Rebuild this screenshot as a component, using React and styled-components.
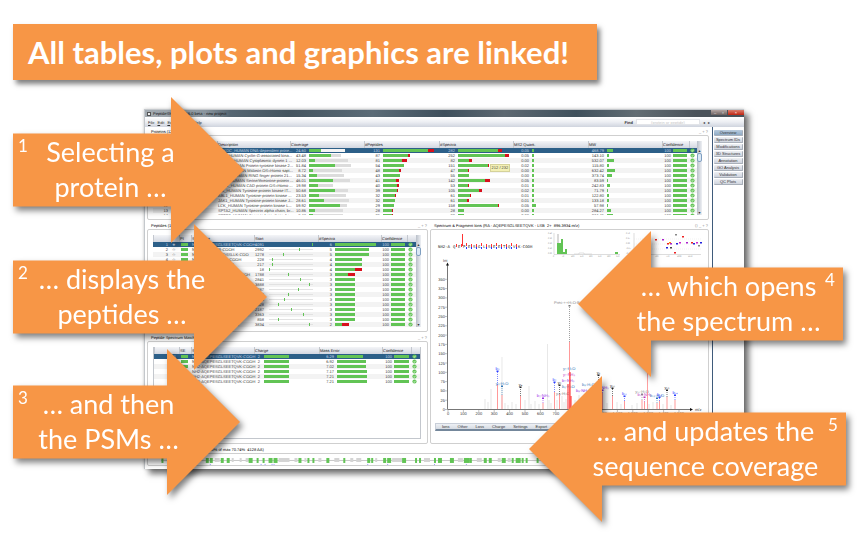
import React from "react";
import styled, { createGlobalStyle, css } from "styled-components";

const ORANGE = "#f79646";
const GREEN = "#62c455";
const RED = "#d8101c";

const Global = createGlobalStyle`
  * { box-sizing: border-box; }
  body { margin: 0; background: #fff; font-family: "Liberation Sans", Arial, sans-serif; }
  button, input { font: inherit; color: inherit; margin: 0; padding: 0; border: 0; background: none; }
`;

/* ---------- slide ---------- */
const Slide = styled.main`
  padding: 24px 21px 0 13px;
`;
const Headline = styled.h1`
  width: fit-content;
  margin: 0;
  padding: 0 28px 0 15px;
  background: ${ORANGE};
  color: #fff;
  font: bold 31px/56px Lato, sans-serif;
  white-space: nowrap;
  box-shadow: 3px 4px 5px rgba(0, 0, 0, 0.5);
`;
const Stage = styled.div`
  position: relative;
  margin-top: 17px;
  padding: 12px 102px 72px 131px;
`;

/* ---------- callout arrows ---------- */
const ArrowPlace = styled.div`
  position: absolute;
  top: ${(p) => p.$top}px;
  ${(p) => (p.$left ? "left: 0;" : `right: ${p.$right || 0}px;`)}
  width: ${(p) => p.$width}px;
  filter: drop-shadow(3px 4px 3px rgba(0, 0, 0, 0.5));
`;
const ArrowShape = styled.div`
  display: flex;
  height: 146px;
  padding: 37px 5px;
  background: ${ORANGE};
  color: #fff;
  ${(p) =>
    p.$left
      ? css`
          padding-right: 54px;
          clip-path: polygon(0 25%, calc(100% - 73px) 25%, calc(100% - 73px) 0, 100% 50%, calc(100% - 73px) 100%, calc(100% - 73px) 75%, 0 75%);
        `
      : css`
          flex-direction: row-reverse;
          padding-left: 54px;
          clip-path: polygon(100% 25%, 73px 25%, 73px 0, 0 50%, 73px 100%, 73px 75%, 100% 75%);
        `}
`;
const ArrowNumber = styled.span`
  width: 13px;
  font: 17px/24px Lato, sans-serif;
`;
const ArrowText = styled.p`
  flex: 1;
  display: flex;
  flex-direction: column;
  align-items: center;
  margin: 0;
  font: 27px/35px Lato, sans-serif;
  white-space: pre;
`;
function Arrow({ left, top, right, width, number, lines }) {
  return (
    <ArrowPlace $left={left} $top={top} $right={right} $width={width}>
      <ArrowShape $left={left}>
        <ArrowNumber>{number}</ArrowNumber>
        <ArrowText>
          {lines.map((l) => (
            <span key={l}>{l}</span>
          ))}
        </ArrowText>
      </ArrowShape>
    </ArrowPlace>
  );
}

/* ---------- application window ---------- */
const Window = styled.section`
  background: #fff;
  color: #333;
  font-size: 4px;
  line-height: 5px;
  text-rendering: geometricPrecision;
  border: 1px solid #c4c8cc;
  border-width: 1px 0 0 1px;
  box-shadow: 5px 5px 6px rgba(0, 0, 0, 0.55), 0 0 3px rgba(0, 0, 0, 0.2);
`;
const TitleBar = styled.header`
  display: flex;
  align-items: center;
  height: 7px;
  padding-left: 2px;
  gap: 2px;
  color: #111;
  background: linear-gradient(90deg, #a3abb2 0, #8b969e 60px, #566672 85px, #44545f 24%, #5b6b77 38%, #3e4f5c 50%, #5d6871 60%, #3f505c 72%, #626d74 82%, #4a525a 92%);
`;
const AppGlyph = styled.span`
  width: 4px;
  height: 4px;
  border: 1px solid #555;
  background: #eee;
`;
const TitleText = styled.span`
  flex: 1;
`;
const WindowButton = styled.button`
  width: ${(p) => (p.$close ? 16 : 8)}px;
  height: 5px;
  align-self: flex-start;
  color: #fff;
  line-height: 4px;
  background: ${(p) => (p.$close ? "linear-gradient(#d98070, #c2230f)" : "linear-gradient(#b5a6a3, #6b605f)")};
  margin-left: ${(p) => (p.$close ? -1 : -2)}px;
`;
const MenuBar = styled.nav`
  display: flex;
  align-items: center;
  gap: 3px;
  height: 10px;
  padding: 0 34px 0 3px;
  background: linear-gradient(#fff, #eceef3 50%, #cfd4de);
`;
const MenuButton = styled.button`
  line-height: 5px;
  &::first-letter {
    text-decoration: underline;
  }
`;
const StepButton = styled.button`
  line-height: 5px;
`;
const FindLabel = styled.label`
  display: flex;
  align-items: center;
  gap: 3px;
  margin-left: auto;
  font-weight: bold;
`;
const FindInput = styled.input`
  width: 64px;
  height: 6px;
  background: #fff;
  border: 1px solid #e2e4e8;
  font-weight: normal;
  text-align: center;
  &::placeholder { color: #c4c4c4; }
`;
const Body = styled.div`
  display: flex;
`;
const Content = styled.div`
  flex: 1;
  min-width: 0;
  display: flex;
  flex-direction: column;
  gap: 2px;
  padding: 1px 3px 3px 2px;
  border-right: 1px solid #3f5b7b;
`;
const Split = styled.div`
  display: grid;
  grid-template-columns: 281fr 279fr;
  gap: 2px;
`;
const Stack = styled.div`
  display: flex;
  flex-direction: column;
  gap: 2px;
  min-width: 0;
`;
const SideTabs = styled.aside`
  width: 31px;
  display: flex;
  flex-direction: column;
  gap: 1px;
  padding: 3px 1px;
`;
const SideTab = styled.button`
  height: 6px;
  line-height: 4px;
  white-space: nowrap;
  border: 1px solid #a9b0ba;
  border-width: 0 1px 1px 0;
  border-radius: 1px;
  background: ${(p) => (p.$on ? "linear-gradient(#b9cbdd, #8fabc6)" : "linear-gradient(#eef0f4, #cfd4de)")};
`;

/* ---------- panels ---------- */
const PanelHead = styled.div`
  display: flex;
  justify-content: space-between;
  height: 7px;
  padding: 1px 1px 0 4px;
`;
const PanelTitle = styled.h2`
  margin: 0;
  font-size: 4px;
  line-height: 5px;
  font-weight: normal;
  color: #000;
  white-space: pre;
`;
const PanelTools = styled.span`
  color: #888;
`;
const Frame = styled.div`
  position: relative;
  height: ${(p) => (p.$h ? `${p.$h}px` : "auto")};
  padding: ${(p) => (p.$flush ? "0" : "5px 6px 4px 5px")};
  border: 1px solid #cfcfcf;
  border-radius: 2px;
`;
const PanelBox = styled.section`
  min-width: 0;
`;
function Panel({ title, tools = "_ + ?", h, flush, children }) {
  return (
    <PanelBox>
      <PanelHead>
        <PanelTitle>{title}</PanelTitle>
        <PanelTools>{tools}</PanelTools>
      </PanelHead>
      <Frame $h={h} $flush={flush}>
        {children}
      </Frame>
    </PanelBox>
  );
}

/* ---------- tables ---------- */
const TableArea = styled.div`
  display: flex;
  height: 100%;
  overflow: hidden;
  border: 1px solid #c3c7cd;
  border-width: 0 ${(p) => (p.$boxed ? 1 : 0)}px ${(p) => (p.$boxed ? 1 : 0)}px ${(p) => (p.$boxed ? 1 : 0)}px;
`;
const Viewport = styled.div`
  flex: 1;
  min-width: 0;
  overflow: hidden;
`;
const Table = styled.table`
  width: 100%;
  table-layout: fixed;
  border-collapse: collapse;
`;
const Col = styled.col`
  width: ${(p) => p.$w}px;
`;
const Th = styled.th`
  height: 7px;
  padding: 0 0 0 1px;
  text-align: left;
  font-weight: normal;
  color: #111;
  line-height: 6px;
  white-space: nowrap;
  background: linear-gradient(#f4f5f8, #d3d7e0);
  box-shadow: inset 1px 0 #c3c7cf;
`;
const Tr = styled.tr`
  background: ${(p) => (p.$on ? "#2c5f88" : p.$odd ? "#fff" : "#f3f3f3")};
  color: ${(p) => (p.$on ? "#c9d9e6" : "#3a3a3a")};
`;
const Td = styled.td`
  height: 5px;
  padding: 0 ${(p) => (p.$align === "right" ? 3 : 0)}px 0 1px;
  line-height: 5px;
  white-space: nowrap;
  text-align: ${(p) => p.$align || "left"};
`;
const CellLine = styled.div`
  display: flex;
  align-items: center;
  height: 5px;
  gap: ${(p) => p.$gap || 3}px;
`;
const Num = styled.span`
  width: ${(p) => p.$w}px;
  text-align: right;
  flex: none;
`;
const Bar = styled.span`
  display: flex;
  flex: none;
  height: 3px;
`;
const Seg = styled.span`
  background: ${(p) => p.$c};
`;
const Line = styled.span`
  position: relative;
  width: 44px;
  height: 1px;
  background: ${(p) => (p.$on ? "none" : "#e2e2e2")};
`;
const Tick = styled.span`
  position: absolute;
  top: -1px;
  width: 1px;
  height: 3px;
  background: ${GREEN};
`;
const IdLink = styled.a`
  color: #2a2ad0;
`;
const ScrollBar = styled.div`
  width: 5px;
  display: flex;
  flex-direction: column;
  justify-content: space-between;
  align-items: center;
  padding-top: 7px;
  background: linear-gradient(90deg, #b9bfc9, #eef0f4);
`;
const Knob = styled.span`
  width: 5px;
  height: 9px;
  margin: 0 0 auto;
  border: 1px solid #7f9fc0;
  border-radius: 2px;
  background: #dbe8f5;
`;
const TooltipBox = styled.div`
  position: absolute;
  left: 61%;
  top: 28px;
  padding: 1px;
  background: #f3f0b4;
  border: 1px solid #d5d29a;
  line-height: 4px;
  color: #444;
`;

const Check = () => (
  <svg width="5" height="5" viewBox="0 0 10 10" role="img" aria-label="Valid">
    <circle cx="5" cy="5" r="4.2" fill={GREEN} />
    <path d="M2.8 5.2 4.4 6.8 7.3 3.4" fill="none" stroke="#fff" strokeWidth="1.3" />
  </svg>
);

function Bars({ n, nw = 15, gap, segs }) {
  return (
    <CellLine $gap={gap}>
      <Num $w={nw}>{n}</Num>
      <Bar>
        {segs.map(([w, c], i) => (
          <Seg key={i} $c={c} style={{ width: w }} />
        ))}
      </Bar>
    </CellLine>
  );
}
function Scroller() {
  return (
    <ScrollBar>
      <span>▴</span>
      <Knob />
      <span>▾</span>
    </ScrollBar>
  );
}
function DataTable({ cols, heads, rows, scroll, boxed }) {
  return (
    <TableArea $boxed={boxed}>
      <Viewport>
        <Table>
          <colgroup>
            {cols.map((w, i) => (
              <Col key={i} $w={w} />
            ))}
          </colgroup>
          <thead>
            <tr>
              {heads.map((h, i) => (
                <Th key={i}>{h}</Th>
              ))}
            </tr>
          </thead>
          <tbody>
            {rows.map((r, i) => (
              <Tr key={i} $on={i === 0} $odd={i % 2 === 1}>
                {r.map((c, j) => (
                  <Td key={j} $align={j === 0 ? "right" : "left"}>
                    {c}
                  </Td>
                ))}
              </Tr>
            ))}
          </tbody>
        </Table>
      </Viewport>
      {scroll && <Scroller />}
    </TableArea>
  );
}

/* accession, description, coverage [value, green, total], peptides, spectra, MS2, MW */
const PROTEINS = [
  ["P78527", "PRKDC_HUMAN DNA-dependent prote...", ["24.60", 12, 36], [131, 45, 6], [282, 40, 4], ["0.05", 2], ["468.79", 6]],
  ["O14976", "GAK_HUMAN Cyclin-G-associated kina...", ["43.48", 22, 32], [87, 25, 2], [252, 47, 4], ["0.05", 2], ["143.10", 2]],
  ["Q14204", "DYHC1_HUMAN Cytoplasmic dynein 1 ...", ["12.03", 6, 39], [81, 19, 5], [82, 11, 3], ["0.00", 2], ["532.07", 7]],
  ["Q14289", "FAK2_HUMAN Protein-tyrosine kinase 2...", ["51.84", 26, 42], [54, 21, 0], [151, 30, 1], ["0.02", 2], ["115.80", 2]],
  ["Q9NU22", "MDN1_HUMAN Midasin OS=Homo sapi...", ["8.72", 4, 33], [48, 16, 2], [47, 10, 1], ["0.00", 2], ["632.42", 8]],
  ["Q63HN8", "RN213_HUMAN RING finger protein 21...", ["15.34", 8, 35], [43, 17, 0], [55, 11, 0], ["0.00", 2], ["373.74", 5]],
  ["Q9UHD2", "TBK1_HUMAN Serine/threonine-protein ...", ["46.01", 24, 41], [41, 13, 3], [142, 27, 5], ["0.05", 2], ["83.59", 1]],
  ["P27708", "PYR1_HUMAN CAD protein OS=Homo ...", ["19.98", 9, 24], [40, 14, 2], [53, 10, 1], ["0.01", 2], ["242.83", 3]],
  ["Q08881", "ITK_HUMAN Tyrosine-protein kinase IT...", ["50.68", 26, 39], [39, 14, 1], [105, 21, 3], ["0.02", 2], ["71.79", 1]],
  ["P00519", "ABL1_HUMAN Tyrosine-protein kinase ...", ["23.53", 10, 37], [32, 12, 1], [61, 12, 1], ["0.01", 2], ["122.80", 2]],
  ["P23458", "JAK1_HUMAN Tyrosine-protein kinase J...", ["28.61", 15, 40], [32, 12, 0], [61, 9, 2], ["0.01", 2], ["133.18", 2]],
  ["P06239", "LCK_HUMAN Tyrosine-protein kinase L...", ["59.92", 31, 38], [29, 11, 0], [158, 40, 1], ["0.05", 4], ["57.98", 1]],
  ["Q13813", "SPTA2_HUMAN Spectrin alpha chain, br...", ["10.86", 6, 34], [28, 9, 1], [28, 6, 0], ["0.00", 2], ["284.27", 4]],
  ["Q01082", "SPTB2_HUMAN Spectrin beta chain, br...", ["8.48", 4, 34], [25, 9, 1], [33, 6, 0], ["0.00", 2], ["274.45", 6]],
];
const proteinRows = PROTEINS.map(([id, d, cov, pep, spec, ms2, mw], i) => [
  i + 1,
  "★",
  <IdLink href={`#${id}`}>{id}</IdLink>,
  d,
  <Bars n={cov[0]} segs={[[cov[1], GREEN], [cov[2] - cov[1], i === 0 ? "#f4f4f4" : "#dcdcdc"]]} />,
  <Bars n={pep[0]} segs={[[pep[1], GREEN], [pep[2], RED]]} />,
  <Bars n={spec[0]} segs={[[spec[1], GREEN], [spec[2], RED]]} />,
  <Bars n={ms2[0]} segs={[[ms2[1], GREEN]]} />,
  <Bars n={mw[0]} segs={[[mw[1], GREEN]]} />,
  <Bars n="100" nw={8} gap={2} segs={[[14, GREEN]]} />,
  <CellLine><Check /></CellLine>,
]);

/* sequence, start, tick offset, spectra, green, red */
const PEPTIDES = [
  ["NH2-AQEPESGLSEETQVK-COOH", 4091, 43, 6, 41, 0],
  ["NH2-LLEEALLR-COOH", 2992, 30, 5, 34, 0],
  ["NH2-GHAVTLVGQSSLLK-COO", 1278, 14, 5, 34, 0],
  ["NH2-FLNILQTLPSK-COOH", 228, 3, 4, 27, 0],
  ["NH2-DILETHLR-COOH", 217, 3, 4, 27, 0],
  ["NH2-LQETLSR-COOH", 18, 0, 4, 20, 7],
  ["NH2-SLGPPQEEDSVPR-COOH", 1788, 19, 3, 13, 7],
  ["NH2-HSSLITPLQR-COOH", 2841, 31, 3, 20, 0],
  ["NH2-AALSALESFLK-COOH", 3888, 40, 3, 20, 0],
  ["NH2-LGASLAFNR-COOH", 2787, 29, 3, 20, 0],
  ["NH2-TVSLLDENK-COOH", 1918, 19, 3, 20, 0],
  ["NH2-LACDVDQVTR-COOH", 1434, 15, 3, 20, 0],
  ["NH2-VTELALTASR-COOH", 828, 9, 3, 20, 0],
  ["NH2-NELEIPGQR-COOH", 2187, 22, 3, 20, 0],
  ["NH2-INQVFHGSNELTK-COOH", 3363, 34, 3, 20, 0],
  ["NH2-LGNPIVPLNIIR-COOH", 858, 9, 3, 20, 0],
  ["NH2-MSTSPEALR-COOH", 3834, 40, 2, 7, 7],
];
const peptideRows = PEPTIDES.map(([seq, start, tick, n, g, r], i) => [
  i + 1,
  i ? "☆" : "★",
  <Bars n="" nw={0} gap={1} segs={[[7, GREEN]]} />,
  seq,
  <CellLine $gap={5}>
    <Num $w={9}>{start}</Num>
    <Line $on={i === 0}><Tick style={{ left: tick }} /></Line>
  </CellLine>,
  <Bars n={n} nw={13} segs={[[g, GREEN], [r, RED]]} />,
  <Bars n="100" nw={7} gap={2} segs={[[14, GREEN]]} />,
  <CellLine><Check /></CellLine>,
]);

const PSMS = [["6.29", 26], ["6.92", 29], ["7.02", 29], ["7.17", 30], ["7.21", 30], ["7.21", 30]];
const psmRows = PSMS.map(([err, w], i) => [
  i + 1,
  <Bars n="" nw={0} gap={1} segs={[[7, GREEN]]} />,
  "NH2-AQEPESGLSEETQVK-COOH",
  <Bars n="2" nw={5} gap={4} segs={[[25, GREEN]]} />,
  <Bars n={err} nw={14} segs={[[w, GREEN]]} />,
  <Bars n="100" nw={9} gap={2} segs={[[15, GREEN]]} />,
  <CellLine><Check /></CellLine>,
]);

/* ---------- spectrum ---------- */
const Chart = styled.svg`
  display: block;
  width: 100%;
  font-family: "Liberation Sans", sans-serif;
`;
const X0 = 448;
const Y0 = 409;
/* x, top of peak, height of label, label, colour */
const PEAKS = [
  [497.5, 385, 371, "b₃", "#2b3cff"],
  [502, 395, 386, "y₃-H₂O", "#2e75b6"],
  [520.5, 396, 387, "y₄", "#222"],
  [543, 403, 398, "b₅-NH₃", "#9b30e8"],
  [554.5, 392, 382, "b₅", "#2b3cff"],
  [559.5, 394, 385, "y₅", "#222"],
  [598.5, 396, 375, "y₆", "#222"],
  [602.5, 393, 390, "b₇-NH₃", "#8a2be2"],
  [612.5, 396, 388, "y₁₀", "#222"],
  [624.5, 401, 396, "b₁₁", "#2b3cff"],
  [642, 400, 394, "y₁₁-H₂O", "#888"],
  [644.5, 402, 397, "b₁₂-NH₃", "#c032c0"],
  [657, 403, 398, "b₁₃-H₂O", "#2e75b6"],
  [659.5, 401, 397, "b₁₃", "#2b3cff"],
  [667, 397, 390, "y₁₃", "#222"],
  [675, 400, 395, "b₁₄", "#2b3cff"],
];
const NOISE = [485, 399, 488, 402, 491, 389, 505, 403, 508, 405, 512, 402, 516, 404, 525, 400, 529, 386, 531, 404, 535, 401, 539, 404, 549, 400, 551, 403, 557, 400, 562, 396, 564, 402, 566, 399, 575, 400, 579, 395, 584, 403, 588, 400, 593, 398, 607, 403, 617, 402, 621, 404, 632, 405, 637, 403, 649, 404, 653, 402, 663, 404, 671, 405];
const CLUSTER = [
  [563, 370, "y₇-H₂O", "#2e75b6"],
  [563, 376, "y₇-NH₃", "#c032c0"],
  [562, 382, "b₇-NH₃", "#8a2be2"],
  [562, 388, "b₆-H₂O", "#2e75b6"],
  [556, 395, "y₁₃-H₂O", "#777"],
  [576, 392, "b₈-NH₃", "#8a2be2"],
  [582, 386, "b₈-H₂O", "#2e75b6"],
];
const SEQ = ["NH2-A", "Q", "E", "P", "E", "S", "G", "L", "S", "E", "E", "T", "Q", "V", "K-COOH"];
const DOTS = [[655, 240, "#e22"], [662, 240, "#a2c"], [675, 235, "#888"], [682, 237, "#e22"], [667, 244, "#e22"], [669, 243, "#f80"], [670, 244, "#a2c"], [676, 244, "#22d"], [679, 243, "#c2c"], [686, 243, "#a2c"], [691, 243, "#e22"], [693, 244, "#22d"], [696, 243, "#c2c"], [700, 243, "#22d"], [666, 248, "#22d"], [670, 248, "#444"], [674, 253, "#e22"], [698, 246, "#888"]];

function Spectrum() {
  const yticks = Array.from({ length: 15 }, (_, i) => i * 25);
  const xticks = Array.from({ length: 16 }, (_, i) => i * 100);
  return (
    <Chart viewBox="431 230 277 190" fontSize="4" role="img" aria-label="Fragment ion spectrum">
      <rect x="462" y="234" width="1" height="12" fill="#f33" />
      {SEQ.map((s, i) => {
        const x = i === 0 ? 438 : 448 + i * 5;
        return (
          <g key={i}>
            <text x={x} y="248" fontFamily="Liberation Mono, monospace" fill="#222">{s}</text>
            {i > 0 && i < 14 && <rect x={x + 3} y={i % 3 ? 244 : 243} width="1" height="3" fill="#f33" />}
            {i > 2 && i < 14 && <rect x={x + 3} y="247" width="1" height="2" fill="#23f" />}
          </g>
        );
      })}
      <path d="M554 233V254.5H620" stroke="#bbb" strokeWidth=".5" fill="none" />
      <path d="M557 254V234H559V254Z" fill="#d9d9d9" />
      <path d="M557 254V243H561V239H563V252H565V249H567V254ZM615 254V252H618V254Z" fill={GREEN} />
      <path d="M574 254H579V253H584V254H592" stroke="#ccc" strokeWidth=".6" fill="none" />
      <path d="M634 233V254.5H701" stroke="#bbb" strokeWidth=".5" fill="none" />
      <path d="M634 239H701M634 244H701M634 249H701" stroke="#ddd" strokeWidth=".4" strokeDasharray="1 1" />
      <g fontSize="2" fill="#777">
        {["0.40", "0.30", "0.20", "0.10", "0.00"].map((v, i) => (
          <text key={v} x="548" y={234 + i * 5}>{v}</text>
        ))}
        {["0.50", "0.25", "0.00", "-0.25", "-0.50"].map((v, i) => (
          <text key={v} x="626" y={234 + i * 5}>{v}</text>
        ))}
        {[0, 50, 100, 150, 200, 250, 300, 350].map((v, i) => (
          <text key={v} x={553 + i * 9} y="257">{v}</text>
        ))}
        {[250, 500, 750, 1000, 1250].map((v, i) => (
          <text key={v} x={644 + i * 11} y="257">{v}</text>
        ))}
      </g>
      {DOTS.map(([x, y, c], i) => (
        <rect key={i} x={x} y={y - 1} width="2" height="1.5" fill={c} />
      ))}

      <path d={`M${X0 - 0.5} 264V${Y0 + 0.5}H691`} stroke="#777" strokeWidth="1" fill="none" />
      <path d="M447.5 262.5l1.5 3h-3zM693 409.5l-3-1.5v3z" fill="#111" />
      <text x="443" y="262" fill="#444">Int</text>
      <text x="695" y="411" fill="#444">m/z</text>
      {yticks.map((v) => (
        <g key={v}>
          <path d={`M445 ${Y0 + 0.5 - (v / 25) * 9.3}h2`} stroke="#999" strokeWidth=".6" />
          <text x="445" y={Y0 + 2 - (v / 25) * 9.3} textAnchor="end" fill="#333">{v}</text>
        </g>
      ))}
      {xticks.map((v) => (
        <g key={v}>
          <path d={`M${X0 + (v / 100) * 15.4} 410v2`} stroke="#999" strokeWidth=".6" />
          <text x={X0 + (v / 100) * 15.4} y="415" textAnchor="middle" fill="#333">{v.toLocaleString("en-US")}</text>
        </g>
      ))}

      {NOISE.map((x, i) => i % 2 === 0 && <path key={i} d={`M${x} ${Y0}V${NOISE[i + 1]}`} stroke="#d5d5d5" strokeWidth=".6" />)}
      <path d="M547.5 409V344M502 409V357" stroke="#d8d8d8" strokeWidth=".6" />
      {PEAKS.map(([x, top, ly, label, c]) => (
        <g key={label + x}>
          <path d={`M${x} ${Y0}V${top}`} stroke="#f99" strokeWidth="1" />
          <path d={`M${x} ${top}V${ly}`} stroke={c} strokeWidth=".6" strokeDasharray="1 1" />
          <rect x={x - 1} y={ly - 0.5} width="2" height="1.5" fill={c} />
          <text x={x} y={ly - 1} textAnchor="middle" fill={c}>{label}</text>
        </g>
      ))}
      {CLUSTER.map(([x, y, t, c]) => (
        <text key={t + y} x={x} y={y} fill={c}>{t}</text>
      ))}
      <path d="M647.5 409V370" stroke="#f88" strokeWidth=".8" />
      <path d="M569.5 342V306" stroke="#777" strokeWidth=".7" strokeDasharray="1 1" />
      <rect x="568.5" y="305" width="2" height="1.5" fill="#777" />
      <path d="M569.5 409V342" stroke="#f99" strokeWidth="1" />
      <path d="M568 409V384M570 409V372M571 409V396" stroke="#f22" strokeWidth="1" />
      <text x="554" y="304" fill="#888">Prec-++H₂O-B</text>
    </Chart>
  );
}
const SpectrumBar = styled.div`
  display: flex;
  align-items: center;
  gap: 8px;
  height: 8px;
  margin: 3px 4px 0;
  padding-left: 6px;
  background: linear-gradient(#eef1f5, #d5dae2);
  border: 1px solid #c8ced8;
  border-bottom: 2px solid #74879b;
`;
const BarButton = styled.button`
  line-height: 5px;
`;

/* ---------- sequence coverage: x, width pairs ---------- */
const COVERED = [160.5, 2, 188, 2, 205, 3, 209, 3, 220, 3, 226, 3, 248, 4, 256, 2, 262, 2, 268, 4, 273, 4, 298, 3, 307, 2, 312, 2, 326, 3, 343, 2, 367, 3, 371, 2, 383, 3, 387, 4, 402, 4, 415, 2, 419, 2, 434, 2, 438, 4, 450, 4, 464, 6, 470, 2, 484, 3, 489, 3, 502, 4, 512, 2, 516, 5, 522, 2, 526, 2, 537, 2, 560, 3, 581, 2, 620, 4, 655, 3, 690, 3];
const BLANK = [170, 8, 195, 4, 214, 5, 231, 2, 239, 2, 245, 3, 278, 11, 294, 3, 304, 2, 318, 3, 334, 5, 350, 3, 356, 5, 375, 2, 392, 10, 424, 6, 458, 5, 477, 5, 498, 3, 508, 3];
function CoverageTrack() {
  return (
    <Chart viewBox="147 454 562 11" role="img" aria-label="Sequence coverage" preserveAspectRatio="none">
      <path d="M160 460.5H700" stroke="#c9c9c9" strokeWidth="1" />
      {BLANK.map((x, i) => i % 2 === 0 && <rect key={i} x={x} y="458" width={BLANK[i + 1]} height="4" fill="#d4d4d4" />)}
      {COVERED.map((x, i) => i % 2 === 0 && <rect key={i} x={x} y="458" width={COVERED[i + 1]} height="5" fill={GREEN} />)}
      {[209, 260, 264, 271, 273, 367, 387, 434, 466].map((x) => (
        <rect key={x} x={x} y="464" width="1" height="1" fill="#99f" />
      ))}
    </Chart>
  );
}

const TABS = ["Overview", "Spectrum IDs", "Modifications", "3D Structures", "Annotation", "GO Analysis", "Validation", "QC Plots"];

export default function App() {
  return (
    <Slide>
      <Global />
      <Headline>All tables, plots and graphics are linked!</Headline>
      <Stage>
        <Window>
          <TitleBar>
            <AppGlyph />
            <TitleText>PeptideShaker v0.16.0 beta - new project</TitleText>
            <WindowButton aria-label="Minimize">–</WindowButton>
            <WindowButton aria-label="Maximize">▫</WindowButton>
            <WindowButton $close aria-label="Close">×</WindowButton>
          </TitleBar>
          <MenuBar>
            {["File", "Edit", "Export", "View", "Help"].map((m) => (
              <MenuButton key={m}>{m}</MenuButton>
            ))}
            <FindLabel>
              Find
              <FindInput placeholder="(protein or peptide)" />
            </FindLabel>
            <StepButton aria-label="Previous">◂</StepButton>
            <StepButton aria-label="Next">▸</StepButton>
          </MenuBar>
          <Body>
            <Content>
              <Panel title="Proteins (1213)" h={85}>
                <DataTable
                  scroll
                  cols={[18, 10, 36, 73, 74, 75, 74, 75, 74, 27, 10]}
                  heads={["", "", "Accession", "Description", "Coverage", "#Peptides", "#Spectra", "MS2 Quant.", "MW", "Confidence", ""]}
                  rows={proteinRows}
                />
                <TooltipBox>212 / 232</TooltipBox>
              </Panel>
              <Split>
                <Stack>
                  <Panel title="Peptides (131)" h={103}>
                    <DataTable
                      scroll
                      cols={[18, 8, 12, 63, 64, 63, 26, 10]}
                      heads={["", "", "PI", "Sequence", "Start", "#Spectra", "Confidence", ""]}
                      rows={peptideRows}
                    />
                  </Panel>
                  <Panel title="Peptide Spectrum Matches (6)" h={103}>
                    <DataTable
                      boxed
                      cols={[25, 12, 63, 65, 63, 29, 10]}
                      heads={["", "SE", "Sequence", "Charge", "Mass Error", "Confidence", ""]}
                      rows={psmRows}
                    />
                  </Panel>
                </Stack>
                <Panel
                  flush
                  h={215}
                  tools="⟨⟩ _ + ?"
                  title="Spectrum & Fragment Ions (RA - AQEPESGLSEETQVK - LSB  2+  896.3934 m/z)"
                >
                  <Spectrum />
                  <SpectrumBar>
                    {["Ions", "Other", "Loss", "Charge", "Settings", "Export", "Help"].map((b) => (
                      <BarButton key={b}>{b}</BarButton>
                    ))}
                  </SpectrumBar>
                </Panel>
              </Split>
              <Panel flush h={13} title="Protein Sequence Coverage (24.60% of max 70.74%  4128 AA)">
                <CoverageTrack />
              </Panel>
            </Content>
            <SideTabs>
              {TABS.map((t, i) => (
                <SideTab key={t} $on={i === 0}>{t}</SideTab>
              ))}
            </SideTabs>
          </Body>
        </Window>

        <Arrow left top={0} width={231} number="1" lines={["Selecting a", "protein …"]} />
        <Arrow left top={127} width={254} number="2" lines={["… displays the", "peptides …"]} />
        <Arrow left top={252} width={227} number="3" lines={["… and then", "the PSMs …"]} />
        <Arrow top={134} right={3} width={265} number="4" lines={["… which opens", "the spectrum …"]} />
        <Arrow top={279} width={317} number="5" lines={["… and updates the", "sequence coverage"]} />
      </Stage>
    </Slide>
  );
}
